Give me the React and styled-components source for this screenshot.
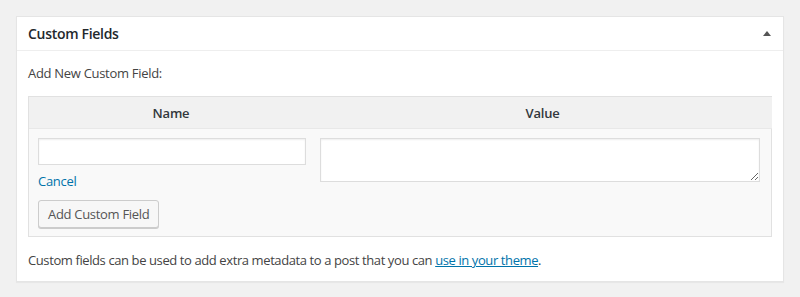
import React from "react";
import styled, { createGlobalStyle } from "styled-components";

const Global = createGlobalStyle`
  html, body { margin: 0; padding: 0; background: #f1f1f1; }
  body { font-family: "Open Sans", "Noto Sans", sans-serif; color: #444; font-size: 13px; }
  * { box-sizing: border-box; }
`;

const Page = styled.div`
  padding: 16px;
  height: 297px;
`;

const Panel = styled.div`
  background: #fff;
  border: 1px solid #e5e5e5;
  box-shadow: 0 1px 1px rgba(0, 0, 0, 0.04);
  width: 768px;
`;

const Header = styled.div`
  height: 34px;
  display: flex;
  align-items: center;
  justify-content: space-between;
  padding: 0 11px 0 11px;
  border-bottom: 1px solid #eee;
`;

const Title = styled.h2`
  margin: 0;
  font-size: 14px;
  font-weight: 600;
  color: #23282d;
  letter-spacing: -0.3px;
`;

const Toggle = styled.span`
  width: 0;
  height: 0;
  border-left: 4px solid transparent;
  border-right: 4px solid transparent;
  border-bottom: 5px solid #555;
  margin-right: 1px;
`;

const Body = styled.div`
  padding: 12px 11px 11px 11px;
`;

const Label = styled.p`
  margin: 0 0 13px;
  line-height: 20px;
  font-size: 13px;
  letter-spacing: -0.3px;
`;

const Table = styled.div`
  border: 1px solid #e1e1e1;
  background: #f9f9f9;
  display: grid;
  grid-template-columns: 284px 1fr;
`;

const HeadCell = styled.div`
  background: #f1f1f1;
  border-bottom: 1px solid #e8e8e8;
  height: 32px;
  display: flex;
  align-items: center;
  justify-content: center;
  font-weight: 600;
  font-size: 13px;
  color: #32373c;
  letter-spacing: -0.2px;
`;

const Cell = styled.div`
  padding: ${(p) => p.$pad};
  display: flex;
  flex-direction: column;
  align-items: flex-start;
`;

const TextInput = styled.input`
  width: 268px;
  height: 27px;
  border: 1px solid #ddd;
  box-shadow: inset 0 1px 2px rgba(0, 0, 0, 0.07);
  background: #fff;
  margin: 0;
  padding: 3px 5px;
  font: inherit;
  outline: none;
`;

const TextArea = styled.textarea`
  width: 440px;
  height: 44px;
  border: 1px solid #ddd;
  box-shadow: inset 0 1px 2px rgba(0, 0, 0, 0.07);
  background: #fff;
  margin: 0;
  padding: 3px 5px;
  font: inherit;
  outline: none;
  display: block;
`;

const Link = styled.a`
  color: #0073aa;
  text-decoration: ${(p) => (p.$underline ? "underline" : "none")};
  cursor: pointer;
`;

const CancelLink = styled(Link)`
  display: block;
  margin-top: 7px;
  line-height: 18px;
  letter-spacing: -0.3px;
`;

const Button = styled.button`
  margin-top: 10px;
  height: 28px;
  padding: 0 9px 1px;
  border: 1px solid #ccc;
  border-radius: 3px;
  background: #f7f7f7;
  box-shadow: 0 1px 0 #ccc;
  color: #555;
  font: inherit;
  font-size: 13px;
  letter-spacing: -0.3px;
  cursor: pointer;
`;

const Note = styled.p`
  margin: 13px 0 0;
  line-height: 20px;
  font-size: 13px;
  letter-spacing: -0.4px;
`;

export default function App() {
  return (
    <>
      <Global />
      <Page>
        <Panel>
          <Header>
            <Title>Custom Fields</Title>
            <Toggle />
          </Header>
          <Body>
            <Label>Add New Custom Field:</Label>
            <Table>
              <HeadCell>Name</HeadCell>
              <HeadCell>Value</HeadCell>
              <Cell $pad="9px 6px 8px 9px">
                <TextInput type="text" />
                <CancelLink>Cancel</CancelLink>
                <Button>Add Custom Field</Button>
              </Cell>
              <Cell $pad="9px 12px 8px 7px">
                <TextArea />
              </Cell>
            </Table>
            <Note>
              Custom fields can be used to add extra metadata to a post that you can{" "}
              <Link $underline>use in your theme</Link>.
            </Note>
          </Body>
        </Panel>
      </Page>
    </>
  );
}
